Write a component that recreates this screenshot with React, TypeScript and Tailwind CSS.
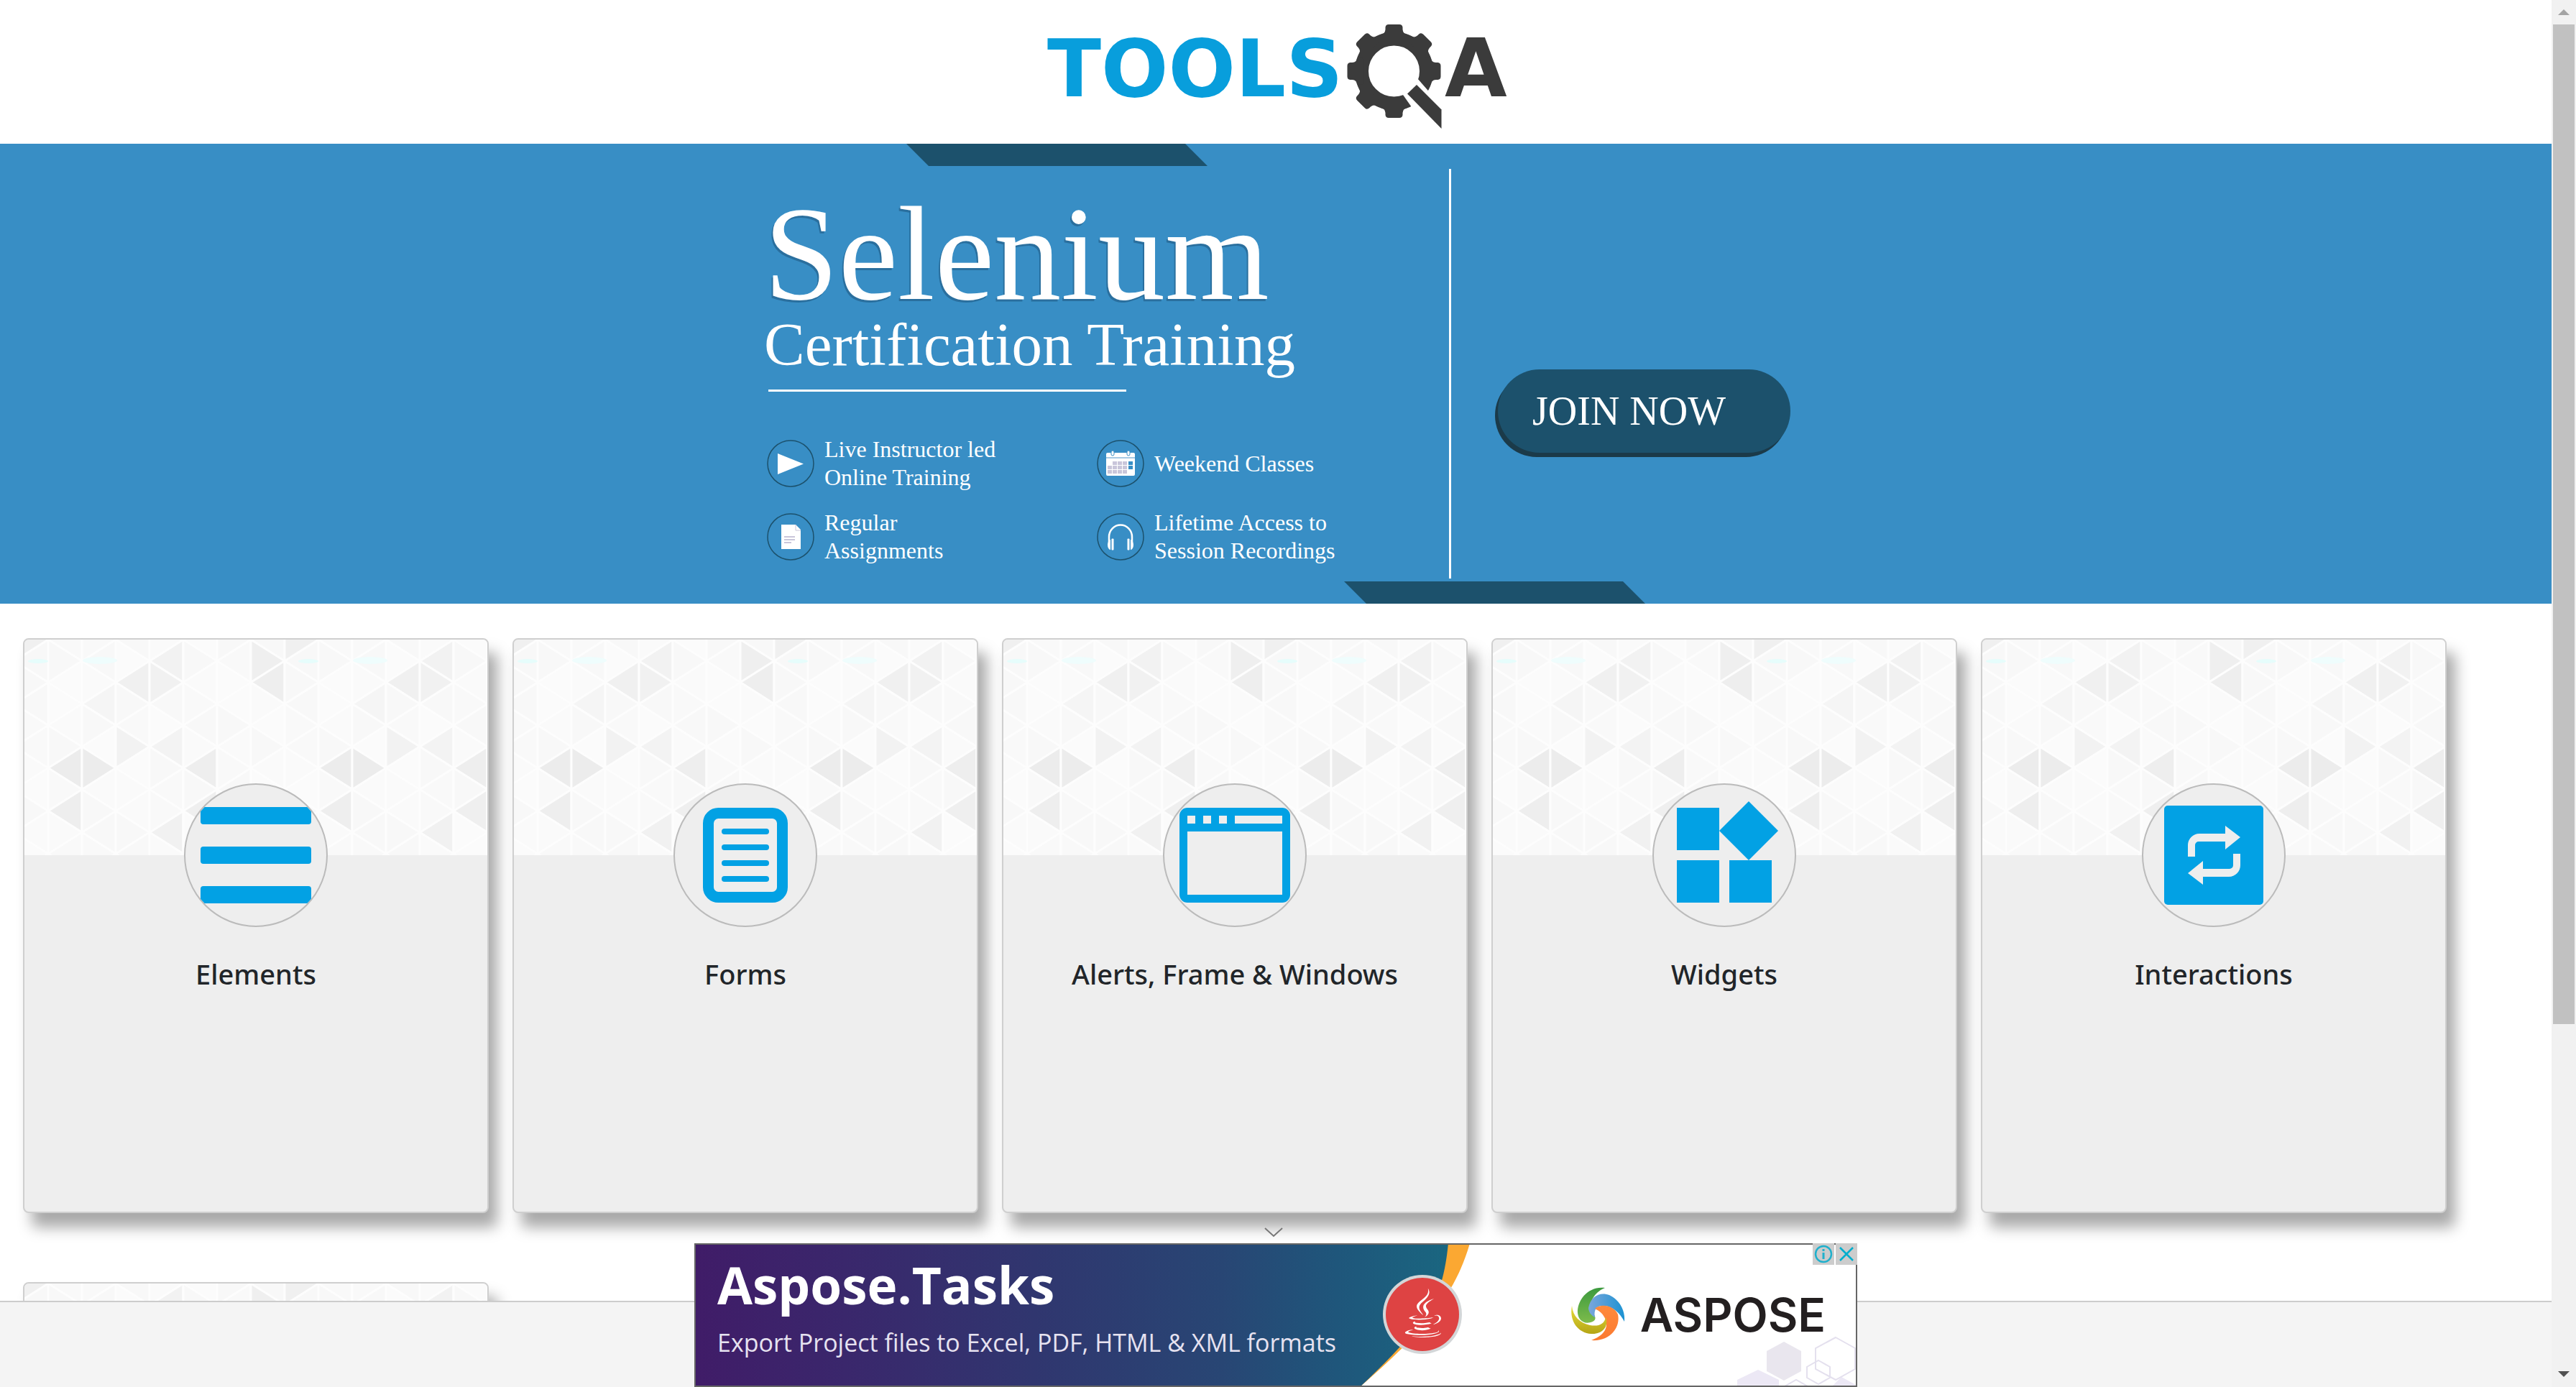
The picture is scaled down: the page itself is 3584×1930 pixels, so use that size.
import React from "react";
import { FaJava } from "react-icons/fa";

const COL = 47;
const ROW = 59.6;

/* Darker facets of the triangle texture, keyed by strip, direction and row. */
const SHADES: Record<string, string> = {
  "0-L-3": "#ececec",
  "0-L-4": "#eeeeee",
  "1-R-3": "#ececec",
  "1-L-1": "#f5f5f5",
  "2-L-1": "#f0f0f0",
  "2-R-2": "#f2f2f2",
  "3-R-1": "#f1f1f1",
  "3-L-0": "#f2f2f2",
  "3-L-2": "#f3f3f3",
  "3-L-4": "#f1f1f1",
  "4-L-3": "#eeeeee",
  "4-L-4": "#efefef",
  "6-L-1": "#eeeeee",
  "6-R-0": "#efefef",
  "7-R-0": "#f0f0f0",
};
const SOFT = ["#f9f9f9", "#fafafa", "#f8f8f8", "#fbfbfb", "#f8f8f8"];

function facets() {
  const list: { key: string; points: string; fill: string }[] = [];
  for (let s = 0; s < 8; s++) {
    const x0 = s * COL;
    const x1 = x0 + COL;
    const even = s % 2 === 0;
    for (let j = -1; j < 6; j++) {
      const ly = (even ? 0 : ROW / 2) + j * ROW;
      const ry = (even ? ROW / 2 : 0) + j * ROW;
      const l = `${s}-L-${j}`;
      const r = `${s}-R-${j}`;
      list.push({
        key: l,
        points: `${x0},${ly} ${x1},${ly - ROW / 2} ${x1},${ly + ROW / 2}`,
        fill: SHADES[l] ?? SOFT[(s * 2 + j * 3 + 5) % 5],
      });
      list.push({
        key: r,
        points: `${x1},${ry} ${x0},${ry - ROW / 2} ${x0},${ry + ROW / 2}`,
        fill: SHADES[r] ?? SOFT[(s * 3 + j + 7) % 5],
      });
    }
  }
  return list;
}
const FACETS = facets();

function Texture({ id }: { id: string }) {
  return (
    <svg className="block h-[300px] w-full" aria-hidden="true">
      <defs>
        <pattern id={id} x="33" y="0" width="376" height="300" patternUnits="userSpaceOnUse">
          <rect width="376" height="300" fill="#f9f9f9" />
          {FACETS.map((f) => (
            <polygon key={f.key} points={f.points} fill={f.fill} stroke="#fdfdfd" strokeWidth="3" />
          ))}
          <ellipse cx="72" cy="29" rx="24" ry="5" fill="#effdfd" />
          <ellipse cx="362" cy="30" rx="14" ry="3" fill="#e6fdfc" />
        </pattern>
      </defs>
      <rect width="100%" height="300" fill={`url(#${id})`} />
    </svg>
  );
}

function ElementsIcon() {
  return (
    <>
      <rect x="23" y="33" width="154" height="24" rx="4" />
      <rect x="23" y="88" width="154" height="24" rx="4" />
      <rect x="23" y="143" width="154" height="24" rx="4" />
    </>
  );
}

function FormsIcon() {
  return (
    <>
      <rect x="48.5" y="41.5" width="103" height="117" rx="14" fill="none" stroke="#02a1e4" strokeWidth="15" />
      {[67, 89, 111, 133].map((y) => (
        <rect key={y} x="67" y={y - 4} width="66" height="8" rx="4" />
      ))}
    </>
  );
}

function WindowIcon() {
  return (
    <path
      fillRule="evenodd"
      d="M34 34H166a11 11 0 0 1 11 11V155a11 11 0 0 1-11 11H34a11 11 0 0 1-11-11V45a11 11 0 0 1 11-11ZM34 45V56H45V45ZM56 45V56H67V45ZM78 45V56H89V45ZM100 45V56H166V45ZM34 67V155H166V67Z"
    />
  );
}

function WidgetsIcon() {
  return <path d="M34 34H93V93H34ZM34 107H93V166H34ZM107 107H166V166H107ZM134 25L175 66L134 107L93 66Z" />;
}

function InteractionsIcon() {
  const arrow = "M64 102V86a16 16 0 0 1 16-16H116V59L137 75L116 92V81H79a5 5 0 0 0-5 5V102Z";
  return (
    <>
      <rect x="31" y="31" width="138" height="138" rx="5" />
      <g fill="#eee">
        <path d={arrow} />
        <path d={arrow} transform="rotate(180 100.5 100)" />
      </g>
    </>
  );
}

const CARDS = [
  { title: "Elements", Icon: ElementsIcon },
  { title: "Forms", Icon: FormsIcon },
  { title: "Alerts, Frame & Windows", Icon: WindowIcon },
  { title: "Widgets", Icon: WidgetsIcon },
  { title: "Interactions", Icon: InteractionsIcon },
];

const CARD =
  "block min-h-[800px] overflow-hidden rounded-lg border-2 border-[#cfcfcf] bg-[#eee] shadow-[12px_20px_20px_rgba(0,0,0,0.34)]";

function CategoryCard({ title, Icon, id }: { title: string; Icon: () => React.ReactElement; id: string }) {
  return (
    <a href="#" className={CARD}>
      <Texture id={id} />
      <div className="relative mx-auto -mt-[100px] size-[200px] overflow-hidden rounded-full border-2 border-[#bbb] bg-[#eee]">
        <svg viewBox="2 2 196 196" className="size-full" fill="#02a1e4" aria-hidden="true">
          <Icon />
        </svg>
      </div>
      <h5 className="mt-10 text-center font-['Noto_Sans','Open_Sans',sans-serif] text-[38px] leading-[50px] font-medium text-[#212529]">
        {title}
      </h5>
    </a>
  );
}

function Logo() {
  const teeth = [0, 45, 90, 180, 225, 270, 315];
  return (
    <svg viewBox="1415 0 720 200" className="h-[200px] w-[720px]" role="img" aria-label="TOOLSQA">
      <text x="1457" y="134" fontFamily="'DejaVu Sans', sans-serif" fontWeight="bold" fontSize="110" fill="#089edc">
        TOOLS
      </text>
      <g fill="#3b3b3b">
        <circle cx="1939.5" cy="99" r="45" fill="none" stroke="#3b3b3b" strokeWidth="19" />
        {teeth.map((a) => (
          <path
            key={a}
            transform={`rotate(${a} 1939.5 99)`}
            d="M1921 48Q1927 47 1927.500 41V38Q1928 34 1932 34H1947Q1951 34 1951.500 38V41Q1952 47 1958 48V56H1921Z"
          />
        ))}
        <path d="M1972 109L2012 155V190L1990 186L1952 132Z" fill="#fff" />
        <path d="M1971 118L2005.500 152.500V179L1958 130.500Z" />
      </g>
      <text x="2010" y="134" fontFamily="'DejaVu Sans', sans-serif" fontWeight="bold" fontSize="112" fill="#3b3b3b">
        A
      </text>
    </svg>
  );
}

function Feature({ lines, children }: { lines: string[]; children: React.ReactNode }) {
  return (
    <li className="flex h-[78px] items-center gap-[14px]">
      <svg viewBox="0 0 66 66" className="size-[66px] shrink-0" fill="#fff" aria-hidden="true">
        <circle cx="33" cy="33" r="32" fill="none" stroke="#1c516c" strokeWidth="1.5" />
        {children}
      </svg>
      <span className="text-[32px] leading-[39px]">
        {lines.map((line) => (
          <span key={line} className="block whitespace-nowrap">
            {line}
          </span>
        ))}
      </span>
    </li>
  );
}

function Banner() {
  return (
    <section className="relative flex min-h-[640px] justify-center bg-[#388ec5] font-['Liberation_Serif',serif] text-white">
      <svg viewBox="0 0 3550 640" className="absolute inset-0 size-full" fill="#1c516c" aria-hidden="true">
        <path d="M1261 0H1649L1680 31H1292Z" />
        <path d="M1870 609H2258L2289 640H1901Z" />
      </svg>
      <div className="relative w-[957px] shrink-0 pt-[65px] pl-1">
        <h1 className="text-[186px] leading-[176px] [text-shadow:-2px_3px_0_#2a6f9e]">Selenium</h1>
        <p className="text-[85px] leading-[76px]">Certification Training</p>
        <hr className="mt-[25px] ml-1.5 h-[3px] w-[498px] border-0 bg-white" />
        <ul className="mt-[61px] ml-1 grid grid-cols-[459px_1fr] gap-y-6">
          <Feature lines={["Live Instructor led", "Online Training"]}>
            <path d="M15 19L51 33.500L15 48Z" />
          </Feature>
          <Feature lines={["Weekend Classes"]}>
            <rect x="13" y="18" width="40" height="32" rx="2" />
            <rect x="13" y="24" width="40" height="2" fill="#a8cbe4" />
            <g fill="#c9c6da">
              <rect x="22" y="30" width="6" height="5" />
              <rect x="29" y="30" width="6" height="5" />
              <rect x="36" y="30" width="6" height="5" />
              <rect x="15" y="36" width="6" height="5" />
              <rect x="22" y="36" width="6" height="5" />
              <rect x="29" y="36" width="6" height="5" />
              <rect x="36" y="36" width="6" height="5" />
              <rect x="15" y="42" width="6" height="5" />
              <rect x="22" y="42" width="6" height="5" />
              <rect x="29" y="42" width="6" height="5" />
              <rect x="36" y="42" width="6" height="5" />
            </g>
            <rect x="44" y="30" width="6" height="5" fill="#388ec5" />
            <rect x="44" y="36" width="6" height="5" fill="#388ec5" />
            <g stroke="#388ec5">
              <rect x="20" y="15" width="4" height="7" rx="2" />
              <rect x="42" y="15" width="4" height="7" rx="2" />
            </g>
          </Feature>
          <Feature lines={["Regular", "Assignments"]}>
            <path d="M20 16H40L47 23V50H20Z" />
            <path d="M40 16V24H47" fill="none" stroke="#c9c6da" />
            <g fill="#c9c6da">
              <rect x="24" y="32" width="15" height="2" />
              <rect x="24" y="36" width="15" height="2" />
              <rect x="24" y="40" width="10" height="2" />
            </g>
          </Feature>
          <Feature lines={["Lifetime Access to", "Session Recordings"]}>
            <path d="M17 40V33a16 16.500 0 0 1 32 0V40" fill="none" stroke="#fff" strokeWidth="2.5" />
            <path d="M19 37v14a4 7 0 0 1 0-14ZM47 37v14a4 7 0 0 0 0-14Z" />
            <rect x="20.5" y="35.5" width="3" height="16" rx="1" />
            <rect x="42.5" y="35.5" width="3" height="16" rx="1" />
          </Feature>
        </ul>
      </div>
      <div className="relative mt-[35px] h-[570px] w-[3px] shrink-0 bg-white" />
      <button
        type="button"
        className="relative mt-[314px] ml-[65px] h-[116px] w-[407px] shrink-0 rounded-full bg-[#1c516c] pl-12 text-left text-[56px] leading-[64px] shadow-[-4px_6px_0_#1b3a49]"
      >
        JOIN NOW
      </button>
    </section>
  );
}

function AdBanner() {
  return (
    <aside aria-label="Advertisement" className="relative h-[200px] w-[1618px] overflow-hidden border-2 border-[#666] bg-white">
      <svg viewBox="2 2 1614 196" className="absolute inset-0 size-full" aria-hidden="true">
        <defs>
          <linearGradient id="ad-bg" x1="0" y1="0" x2="1050" y2="0" gradientUnits="userSpaceOnUse">
            <stop offset="0" stopColor="#401c68" />
            <stop offset="0.2" stopColor="#3a276c" />
            <stop offset="0.45" stopColor="#30366f" />
            <stop offset="0.7" stopColor="#284674" />
            <stop offset="0.85" stopColor="#1f567b" />
            <stop offset="1" stopColor="#1a6680" />
          </linearGradient>
          <linearGradient id="sw-green" x1="0" y1="0" x2="0" y2="1">
            <stop offset="0" stopColor="#3c9a3f" />
            <stop offset="1" stopColor="#7dbb4b" />
          </linearGradient>
          <linearGradient id="sw-blue" x1="0" y1="0" x2="1" y2="0">
            <stop offset="0" stopColor="#7ba6db" />
            <stop offset="1" stopColor="#1c92d2" />
          </linearGradient>
          <linearGradient id="sw-orange" x1="0" y1="0" x2="0" y2="1">
            <stop offset="0" stopColor="#ff8a3c" />
            <stop offset="1" stopColor="#fb7a30" />
          </linearGradient>
          <linearGradient id="sw-yellow" x1="0" y1="0" x2="0" y2="1">
            <stop offset="0" stopColor="#e6dc3a" />
            <stop offset="1" stopColor="#b5a515" />
          </linearGradient>
        </defs>
        <path d="M1000 0H1079C1066 45 1045 80 1016 112C988 145 958 172 926 200H900Z" fill="#fba832" />
        <path d="M0 0H1049C1044 50 1034 78 1012 108C984 144 956 172 926 200H0Z" fill="url(#ad-bg)" />
        <circle cx="1013" cy="99" r="55" fill="#d3d6d8" />
        <circle cx="1013" cy="99" r="51" fill="#de4343" />
        <g transform="translate(1220 61)">
          <path d="M47 1C24 -2 8 18 9 36C10 46 18 53 30 48C36 45 33 40 31 37C22 26 30 8 47 1Z" fill="url(#sw-green)" />
          <path d="M24 29C28 8 48 4 62 17C72 26 75 38 74 48C68 36 58 27 46 26C36 25 31 30 33 42C28 40 24 34 24 29Z" fill="url(#sw-blue)" />
          <path d="M33 30C42 22 60 26 65 38C69 56 54 76 28 74C44 68 52 58 48 46C45 37 39 33 33 30Z" fill="url(#sw-orange)" />
          <path d="M1 26C2 40 12 50 26 53C38 55 46 52 48 42C53 56 42 66 28 65C10 64 -3 48 1 26Z" fill="url(#sw-yellow)" />
        </g>
        <path d="M1516 137L1540 150V178L1516 191L1492 178V150Z" fill="#e9e6ee" />
        <path d="M1480 176L1509 190V205H1451V190Z" fill="#ece8f5" />
        <path d="M1596 186L1616 197V202H1580Z" fill="#ece8f5" />
        <g fill="none" stroke="#e4e0ee" strokeWidth="2">
          <path d="M1588 131L1615 146V175L1588 190L1560 175V146Z" />
          <path d="M1564 163L1580 172V187L1564 196L1548 187V172Z" />
          <path d="M1517 199L1533 190L1549 199" />
        </g>
      </svg>
      <FaJava className="absolute top-[61px] left-[978px] size-[68px] text-white" aria-hidden="true" />
      <div className="relative flex h-full items-start justify-between">
        <div className="pt-2.5 pl-[30px] font-['Open_Sans',sans-serif] text-white">
          <p className="text-[71px] leading-[92px] font-bold">Aspose.Tasks</p>
          <p className="text-[34px] leading-[68px] whitespace-nowrap text-[#e6e2f0]">
            Export Project files to Excel, PDF, HTML &amp; XML formats
          </p>
        </div>
        <p className="pt-[58px] pr-[42px] font-['Inter',sans-serif] text-[64px] leading-[80px] font-semibold text-[#231f20]">
          ASPOSE
        </p>
      </div>
    </aside>
  );
}

function BottomAd() {
  return (
    <div className="absolute inset-x-0 bottom-0">
      <div className="absolute inset-x-0 bottom-0 h-[120px] border-t-2 border-[#ccc] bg-[#f4f4f4]" />
      <div className="relative mx-auto w-[1618px]">
        <button type="button" aria-label="Collapse advertisement" className="ml-[790px] block h-[30px] w-8">
          <svg viewBox="0 0 32 30" className="size-full" fill="none" stroke="#777" strokeWidth="2" aria-hidden="true">
            <path d="M4 9L16 20L28 9" />
          </svg>
        </button>
        <AdBanner />
        <div className="absolute top-[30px] right-0 flex gap-0.5">
          <button type="button" aria-label="Ad information" className="size-[30px] bg-[#ccc]">
            <svg viewBox="0 0 30 30" className="size-full" fill="none" stroke="#20b0cc" strokeWidth="2.5" aria-hidden="true">
              <circle cx="15" cy="15" r="11" />
              <path d="M15 13V22M15 8V11" strokeWidth="3" />
            </svg>
          </button>
          <button type="button" aria-label="Close advertisement" className="size-[30px] bg-[#ccc]">
            <svg viewBox="0 0 30 30" className="size-full" stroke="#00aecd" strokeWidth="2.5" aria-hidden="true">
              <path d="M6 6L24 24M24 6L6 24" />
            </svg>
          </button>
        </div>
      </div>
    </div>
  );
}

function ScrollBar() {
  return (
    <div className="flex w-[34px] shrink-0 flex-col items-center bg-[#f1f1f1]" aria-hidden="true">
      <svg viewBox="0 0 34 34" className="size-[34px] shrink-0" fill="#a3a3a3">
        <path d="M9 21H25L17 13Z" />
      </svg>
      <div className="h-[1391px] w-[30px] bg-[#c1c1c1]" />
      <svg viewBox="0 0 34 34" className="mt-auto size-[34px] shrink-0" fill="#505050">
        <path d="M9 12H25L17 20Z" />
      </svg>
    </div>
  );
}

export default function App() {
  return (
    <div className="flex h-screen overflow-hidden bg-white">
      <div className="relative min-w-0 flex-1 overflow-hidden">
        <header className="flex h-[200px] justify-center">
          <a href="#" className="block">
            <Logo />
          </a>
        </header>
        <main>
          <Banner />
          <div className="grid grid-cols-5 gap-x-[33px] gap-y-24 pt-12 pr-[146px] pl-8">
            {CARDS.map((card, i) => (
              <CategoryCard key={card.title} id={`facets-${i}`} {...card} />
            ))}
            <div className={CARD}>
              <Texture id="facets-next" />
            </div>
          </div>
        </main>
        <BottomAd />
      </div>
      <ScrollBar />
    </div>
  );
}
